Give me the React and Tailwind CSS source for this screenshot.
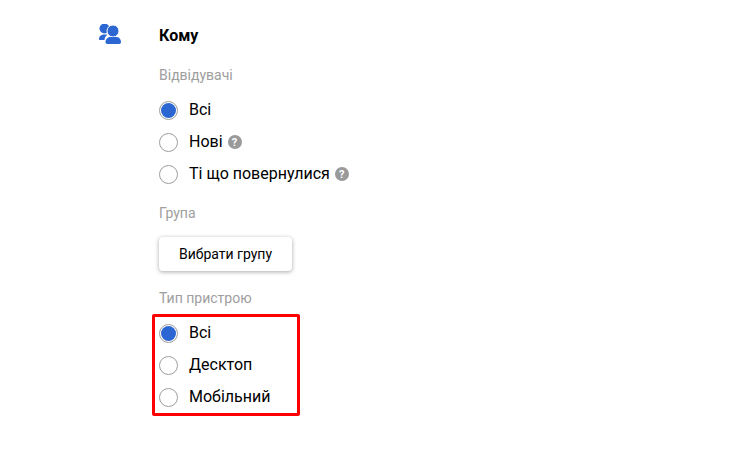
const Radio = ({ label, checked, help }) => (
  <label className="flex h-8 items-center">
    <span className="flex h-[19px] w-[19px] shrink-0 items-center justify-center rounded-full border border-[#9e9e9e] bg-white">
      {checked && <span className="h-[15px] w-[15px] rounded-full bg-[#2b66d3]" />}
    </span>
    <span className="ml-[11px] text-base text-black">{label}</span>
    {help && (
      <span className="ml-[5px] flex h-[14px] w-[14px] items-center justify-center rounded-full bg-[#9a9a9a] text-[11px] leading-none font-bold text-white">
        ?
      </span>
    )}
  </label>
);

const UsersIcon = () => (
  <svg width="22" height="21" viewBox="0 0 22 21" className="shrink-0">
    <circle cx="5.500" cy="4.500" r="5" fill="#2b66d3" />
    <circle cx="14" cy="7" r="6" fill="#2b66d3" stroke="#fff" strokeWidth="1" />
    <path d="M0 15C0 12 2.500 10.500 5 10.500h3.500c-1.800 1.400-3 3.400-3 5.600H1c-.6 0-1-.5-1-1.100z" fill="#2b66d3" />
    <path d="M6.500 18c0-3 2.500-5 5-5h6c2.500 0 4.500 2 4.500 5 0 1.200-.8 2-2 2H8.500c-1.200 0-2-.8-2-2z" fill="#2b66d3" />
  </svg>
);

export default function App() {
  return (
    <div className="flex min-h-[464px] items-start bg-white pt-[24px] pl-[99px] font-['Roboto',sans-serif]">
      <UsersIcon />
      <div className="ml-[38px] flex flex-col">
        <h3 className="mt-[2px] text-base leading-5 font-bold text-black">Кому</h3>
        <p className="mt-[19px] text-sm leading-5 text-[#9e9e9e]">Відвідувачі</p>
        <div className="mt-[9px] flex flex-col">
          <Radio label="Всі" checked />
          <Radio label="Нові" help />
          <Radio label="Ті що повернулися" help />
        </div>
        <p className="mt-[13px] text-sm leading-5 text-[#9e9e9e]">Група</p>
        <button className="mt-[14px] h-[34px] w-[133px] rounded bg-white text-sm text-black shadow-[0_1px_4px_rgba(0,0,0,0.35)]">
          Вибрати групу
        </button>
        <p className="mt-[17px] text-sm leading-5 text-[#9e9e9e]">Тип пристрою</p>
        <div className="mt-[6px] -ml-[7px] flex w-[148px] flex-col rounded-[2px] border-[3px] border-[#ff0000] pl-[4px]">
          <Radio label="Всі" checked />
          <Radio label="Десктоп" />
          <Radio label="Мобільний" />
        </div>
      </div>
    </div>
  );
}
